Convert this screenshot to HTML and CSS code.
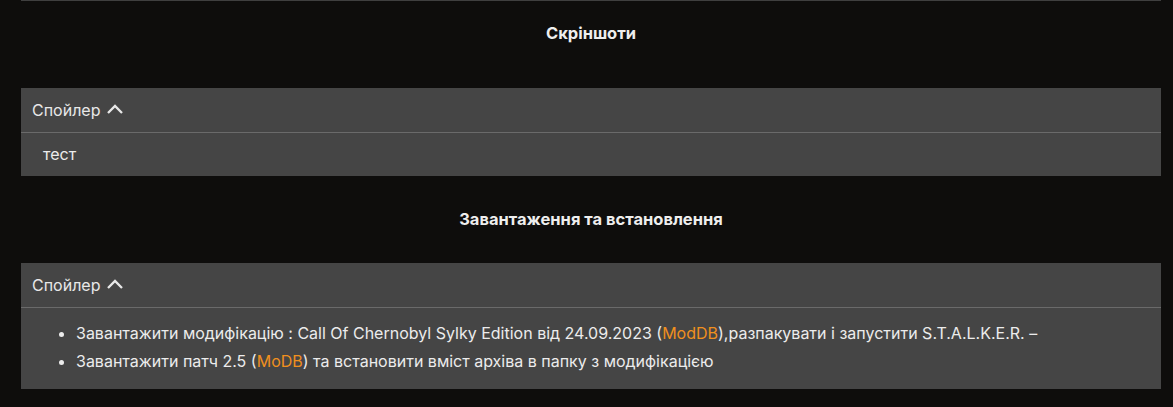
FILE: index.html
```html
<!DOCTYPE html>
<html lang="uk">
<head>
  <meta charset="UTF-8">
  <title>Call Of Chernobyl Sylky Edition</title>
  <link rel="stylesheet" href="styles.css">
</head>
<body>
  <div class="wrapper">
    <h3 class="title first">Скріншоти</h3>
    <div class="spoiler">
      <div class="spoiler-head">Спойлер
        <svg class="chev" width="18" height="16" viewBox="0 0 18 16"><path d="M2 12 L9 5 L16 12" fill="none" stroke="currentColor" stroke-width="2.3"/></svg>
      </div>
      <div class="spoiler-body"><p>тест</p></div>
    </div>

    <h3 class="title">Завантаження та встановлення</h3>
    <div class="spoiler">
      <div class="spoiler-head">Спойлер
        <svg class="chev" width="18" height="16" viewBox="0 0 18 16"><path d="M2 12 L9 5 L16 12" fill="none" stroke="currentColor" stroke-width="2.3"/></svg>
      </div>
      <div class="spoiler-body">
        <ul>
          <li>Завантажити модифікацію : Call Of Chernobyl Sylky Edition від 24.09.2023 (<a href="#">ModDB</a>),разпакувати і запустити S.T.A.L.K.E.R. –</li>
          <li>Завантажити патч 2.5 (<a href="#">MoDB</a>) та встановити вміст архіва в папку з модифікацією</li>
        </ul>
      </div>
    </div>
  </div>
</body>
</html>
```

FILE: styles.css
```css
body { background: #0e0d0c; color: #ececec; font-family: Inter, "Noto Sans", sans-serif; font-size: 16px; margin: 0; }
.wrapper { width: 1140px; margin-left: 21px; border-top: 1px solid #3f3f3f; }

.title { margin: 0; padding: 33px 0 0; height: 87px; box-sizing: border-box; text-align: center; font-size: 16.5px; font-weight: 700; line-height: 20px; color: #eeeeee; }
.title.first { padding-top: 22px; }

.spoiler { background: #454545; }
.spoiler-head { display: flex; align-items: center; gap: 6px; height: 45px; padding: 0 11px; border-bottom: 1px solid #6a6a6a; box-sizing: border-box; color: #e8e8e8; }
.chev { display: block; margin-top: -3px; }
.spoiler-body { padding: 0 22px; }
.spoiler-body p { margin: 0; line-height: 43px; }
.spoiler-body ul { margin: 0; padding: 11px 0 14px 33px; }
.spoiler-body li { line-height: 28px; }
.spoiler-body a { color: #f0901e; text-decoration: none; }
```
